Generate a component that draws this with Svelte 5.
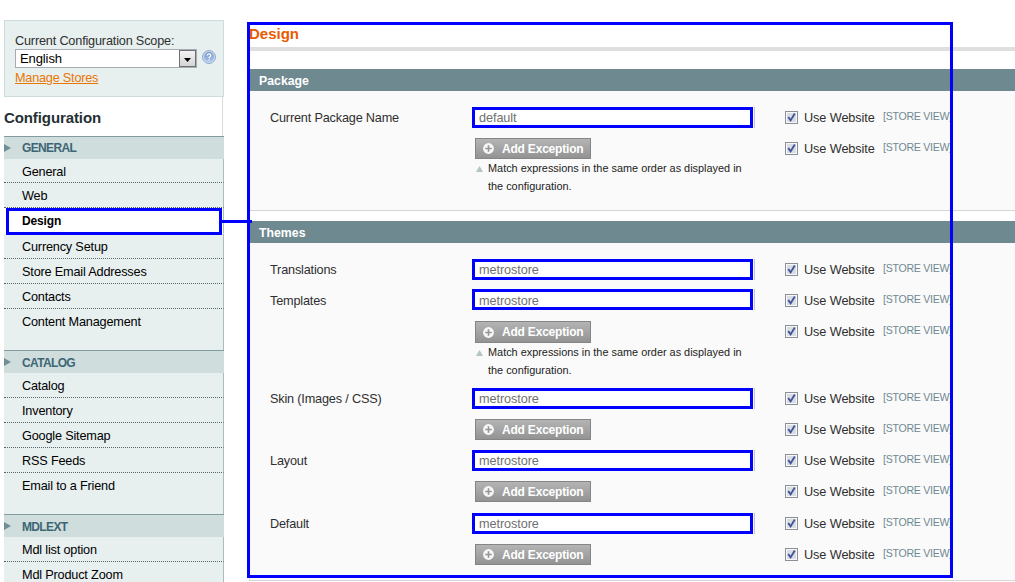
<script>
  const sections = [
    {
      title: 'GENERAL',
      items: ['General', 'Web', 'Design', 'Currency Setup', 'Store Email Addresses', 'Contacts', 'Content Management']
    },
    { title: 'CATALOG', items: ['Catalog', 'Inventory', 'Google Sitemap', 'RSS Feeds', 'Email to a Friend'] },
    { title: 'MDLEXT', items: ['Mdl list option', 'Mdl Product Zoom'] }
  ];
  const panels = [
    {
      title: 'Package',
      rows: [
        { label: 'Current Package Name', value: 'default' },
        { note: true, last: true }
      ]
    },
    {
      title: 'Themes',
      rows: [
        { label: 'Translations', value: 'metrostore' },
        { label: 'Templates', value: 'metrostore', raised: true },
        { note: true },
        { label: 'Skin (Images / CSS)', value: 'metrostore' },
        {},
        { label: 'Layout', value: 'metrostore' },
        { tall: true },
        { label: 'Default', value: 'metrostore' },
        { last: true }
      ]
    }
  ];
</script>

<div class="page">
  <aside>
    <div class="scope">
      <div class="scope-label">Current Configuration Scope:</div>
      <div class="scope-row">
        <div class="select">
          <span>English</span>
          <div class="arrow"><svg width="7" height="4" viewBox="0 0 7 4"><path d="M0 0H7L3.5 4Z" fill="#000" /></svg></div>
        </div>
        <svg class="help" width="14" height="14" viewBox="0 0 14 14">
          <defs>
            <linearGradient id="helpfill" x1="0" y1="0" x2="0" y2="1">
              <stop offset="0" stop-color="#7696c6" />
              <stop offset="1" stop-color="#a9c8ec" />
            </linearGradient>
          </defs>
          <circle cx="7" cy="7" r="6.4" fill="#d3e0f2" stroke="#86a3cd" stroke-width="1" />
          <circle cx="7" cy="7" r="4.9" fill="url(#helpfill)" />
          <path d="M5.2 5.6C5.2 3.4 8.8 3.4 8.8 5.6C8.8 6.8 7 6.8 7 8.3M7 9.4V10.6" fill="none" stroke="#fff" stroke-width="1.3" />
        </svg>
      </div>
      <a href="#stores">Manage Stores</a>
    </div>
    <h2>Configuration</h2>
    <nav>
      {#each sections as section}
        <div class="group">
          <div class="group-title">
            <svg width="7" height="8" viewBox="0 0 7 8"><path d="M0 0L7 4L0 8Z" fill="#6f8f97" /></svg>
            <span>{section.title}</span>
          </div>
          {#each section.items as item}
            <div class="item" class:active={item === 'Design'}>{item}</div>
          {/each}
        </div>
      {/each}
    </nav>
  </aside>

  <main>
    <h1>Design</h1>
    {#each panels as panel}
      <section>
        <h3>{panel.title}</h3>
        <div class="body">
          {#each panel.rows as row}
            <div class="row" class:noted={row.note} class:tall={row.tall} class:last={row.last}>
              <div class="label">{row.label ?? ''}</div>
              <div class="value">
                {#if row.value}
                  <div class="field" class:raised={row.raised}>{row.value}</div>
                {:else}
                  <div class="button" class:big={row.note && !row.last}>
                    <svg width="11" height="11" viewBox="0 0 11 11">
                      <circle cx="5.5" cy="5.5" r="5.4" fill="#f6f6f6" />
                      <path d="M5.5 2.3V8.7M2.3 5.5H8.7" stroke="#959595" stroke-width="1.6" />
                    </svg>
                    <span>Add Exception</span>
                  </div>
                {/if}
                {#if row.note}
                  <div class="note">
                    <svg width="7" height="6" viewBox="0 0 7 6"><path d="M3.5 0L7 6H0Z" fill="#b4c4bf" /></svg>
                    <p>Match expressions in the same order as displayed in<br />the configuration.</p>
                  </div>
                {/if}
              </div>
              <div class="inherit">
                <svg width="13" height="13" viewBox="0 0 13 13">
                  <rect x="0.5" y="0.5" width="12" height="12" fill="#f8f8f8" stroke="#8b9097" />
                  <rect x="2" y="2" width="9" height="9" fill="#d9dde3" />
                  <path d="M3.2 6L5.6 9.4L9.8 2.6" fill="none" stroke="#42549a" stroke-width="1.9" />
                </svg>
                <span>Use Website</span>
              </div>
              <div class="store">[STORE VIEW]</div>
            </div>
          {/each}
        </div>
      </section>
    {/each}
  </main>

  <div class="mark-item"></div>
  <div class="mark-line"></div>
  <div class="mark-frame"></div>
</div>

<style>
  :global(body) { margin: 0; background: #fff; overflow: hidden; }
  .page {
    position: relative;
    width: 1015px;
    height: 582px;
    overflow: hidden;
    display: flex;
    box-sizing: border-box;
    padding: 20px 0 0 4px;
    font: 12.7px/24px "Liberation Sans", Arial, sans-serif;
    letter-spacing: -0.18px;
    color: #2f2f2f;
    white-space: nowrap;
  }
  .page * { box-sizing: border-box; }
  h1, h2, h3, p { margin: 0; }
  svg { display: block; flex: none; }

  aside { width: 220px; flex: none; }
  .scope {
    height: 77px;
    padding: 12px 0 0 10px;
    background: #e7efef;
    border: 1px solid #cddddd;
  }
  .scope-label { height: 16px; line-height: 16px; }
  .scope-row { display: flex; gap: 5px; height: 19px; }
  .select {
    width: 182px;
    height: 19px;
    display: flex;
    justify-content: space-between;
    border: 1px solid #a5acb2;
    background: #fff;
    color: #000;
    font-size: 13px;
    letter-spacing: -0.1px;
    line-height: 18px;
    padding-left: 4px;
  }
  .arrow {
    width: 17px;
    height: 17px;
    display: flex;
    align-items: center;
    justify-content: center;
    border: 1px solid #707070;
    background: linear-gradient(#f3f3f3, #d4d4d4);
  }
  .arrow svg { margin-top: 2px; }
  .help { margin-top: 1px; }
  .scope a { display: block; height: 18px; line-height: 18px; color: #ea7601; letter-spacing: -0.22px; margin-top: 1px; }
  h2 {
    height: 39px;
    line-height: 42px;
    font-size: 15px;
    letter-spacing: -0.1px;
    color: #253033;
    border-right: 1px solid #d6dcdc;
    width: 219px;
  }
  .group-title {
    height: 23px;
    display: flex;
    align-items: center;
    gap: 11px;
    border-top: 1px solid #849ba0;
    background: #d0dddd;
    color: #3d6675;
    font-weight: bold;
    font-size: 12px;
    letter-spacing: -0.65px;
  }
  .group + .group .group-title span { padding-top: 2px; }
  .item {
    height: 25px;
    line-height: 26px;
    padding-left: 18px;
    background: #e7efef;
    border-right: 1px solid #a9bdbf;
    border-bottom: 1px dotted #55666a;
    color: #000;
  }
  .group:first-child .item:nth-child(2) { height: 24px; }
  .item.active {
    height: 26px;
    line-height: 27px;
    background: #fff;
    border-bottom-color: transparent;
    font-weight: bold;
    font-size: 12px;
    letter-spacing: -0.15px;
  }
  .item:last-child { height: 41px; border-bottom: 0; }

  main { width: 767px; flex: none; margin-left: 24px; }
  h1 {
    height: 31px;
    margin-left: 1px;
    border-bottom: 4px solid #dfdfdf;
    line-height: 28px;
    font-size: 15px;
    letter-spacing: 0;
    color: #e85b00;
    margin-bottom: 18px;
  }
  section { margin: 0 0 10px 1px; }
  h3 {
    height: 22px;
    padding-left: 10px;
    background: #6f8990;
    color: #fff;
    line-height: 24px;
    font-size: 12.3px;
    letter-spacing: 0;
  }
  .body {
    padding: 11px 0 0 20px;
    background: #fafafa;
    border: 1px solid #d6d6d6;
    border-width: 0 0 1px 1px;
  }
  .row { display: flex; height: 31px; }
  .row.tall { height: 32px; }
  .row.noted { height: 67px; }
  .row.last { height: 41px; }
  .row.noted.last { height: 77px; }
  .label { width: 202px; line-height: 32px; }
  .value { width: 313px; }
  .field {
    width: 281px;
    height: 21px;
    margin-top: 5px;
    border: 3px solid #0000fe;
    box-shadow: 1px 0 0 #fafafa, 2px 0 0 #c4c4c4;
    background: #fff;
    color: #707070;
    letter-spacing: -0.08px;
    line-height: 17px;
    padding-left: 4px;
  }
  .field.raised { margin-top: 4px; line-height: 18px; }
  .button {
    width: 116px;
    height: 21px;
    margin: 5px 0 0 3px;
    display: flex;
    align-items: center;
    gap: 8px;
    padding-left: 7px;
    border: 1px solid #858585;
    background: linear-gradient(#b4b4b4, #939393);
    color: #fff;
    font-weight: bold;
    font-size: 12px;
    letter-spacing: -0.2px;
    line-height: 19px;
  }
  .button.big { height: 22px; }
  .note { display: flex; gap: 5px; margin-left: 4px; font-size: 10.9px; letter-spacing: 0; line-height: 18px; color: #222; }
  .button:not(.big) span { padding-top: 1px; }
  .note svg { margin-top: 7px; }
  .inherit { display: flex; align-items: center; gap: 6px; width: 98px; height: 31px; letter-spacing: -0.09px; }
  .store { height: 31px; line-height: 29px; font-size: 10.6px; letter-spacing: -0.28px; color: #6f8992; }

  .mark-item, .mark-line, .mark-frame { position: absolute; }
  .mark-item { left: 6px; top: 208px; width: 216px; height: 27px; border: 3px solid #0000fe; }
  .mark-line { left: 221px; top: 220px; width: 31px; height: 3px; background: #0000fe; }
  .mark-frame { left: 247px; top: 22px; width: 706px; height: 556px; border: 3px solid #0000fe; }
</style>
